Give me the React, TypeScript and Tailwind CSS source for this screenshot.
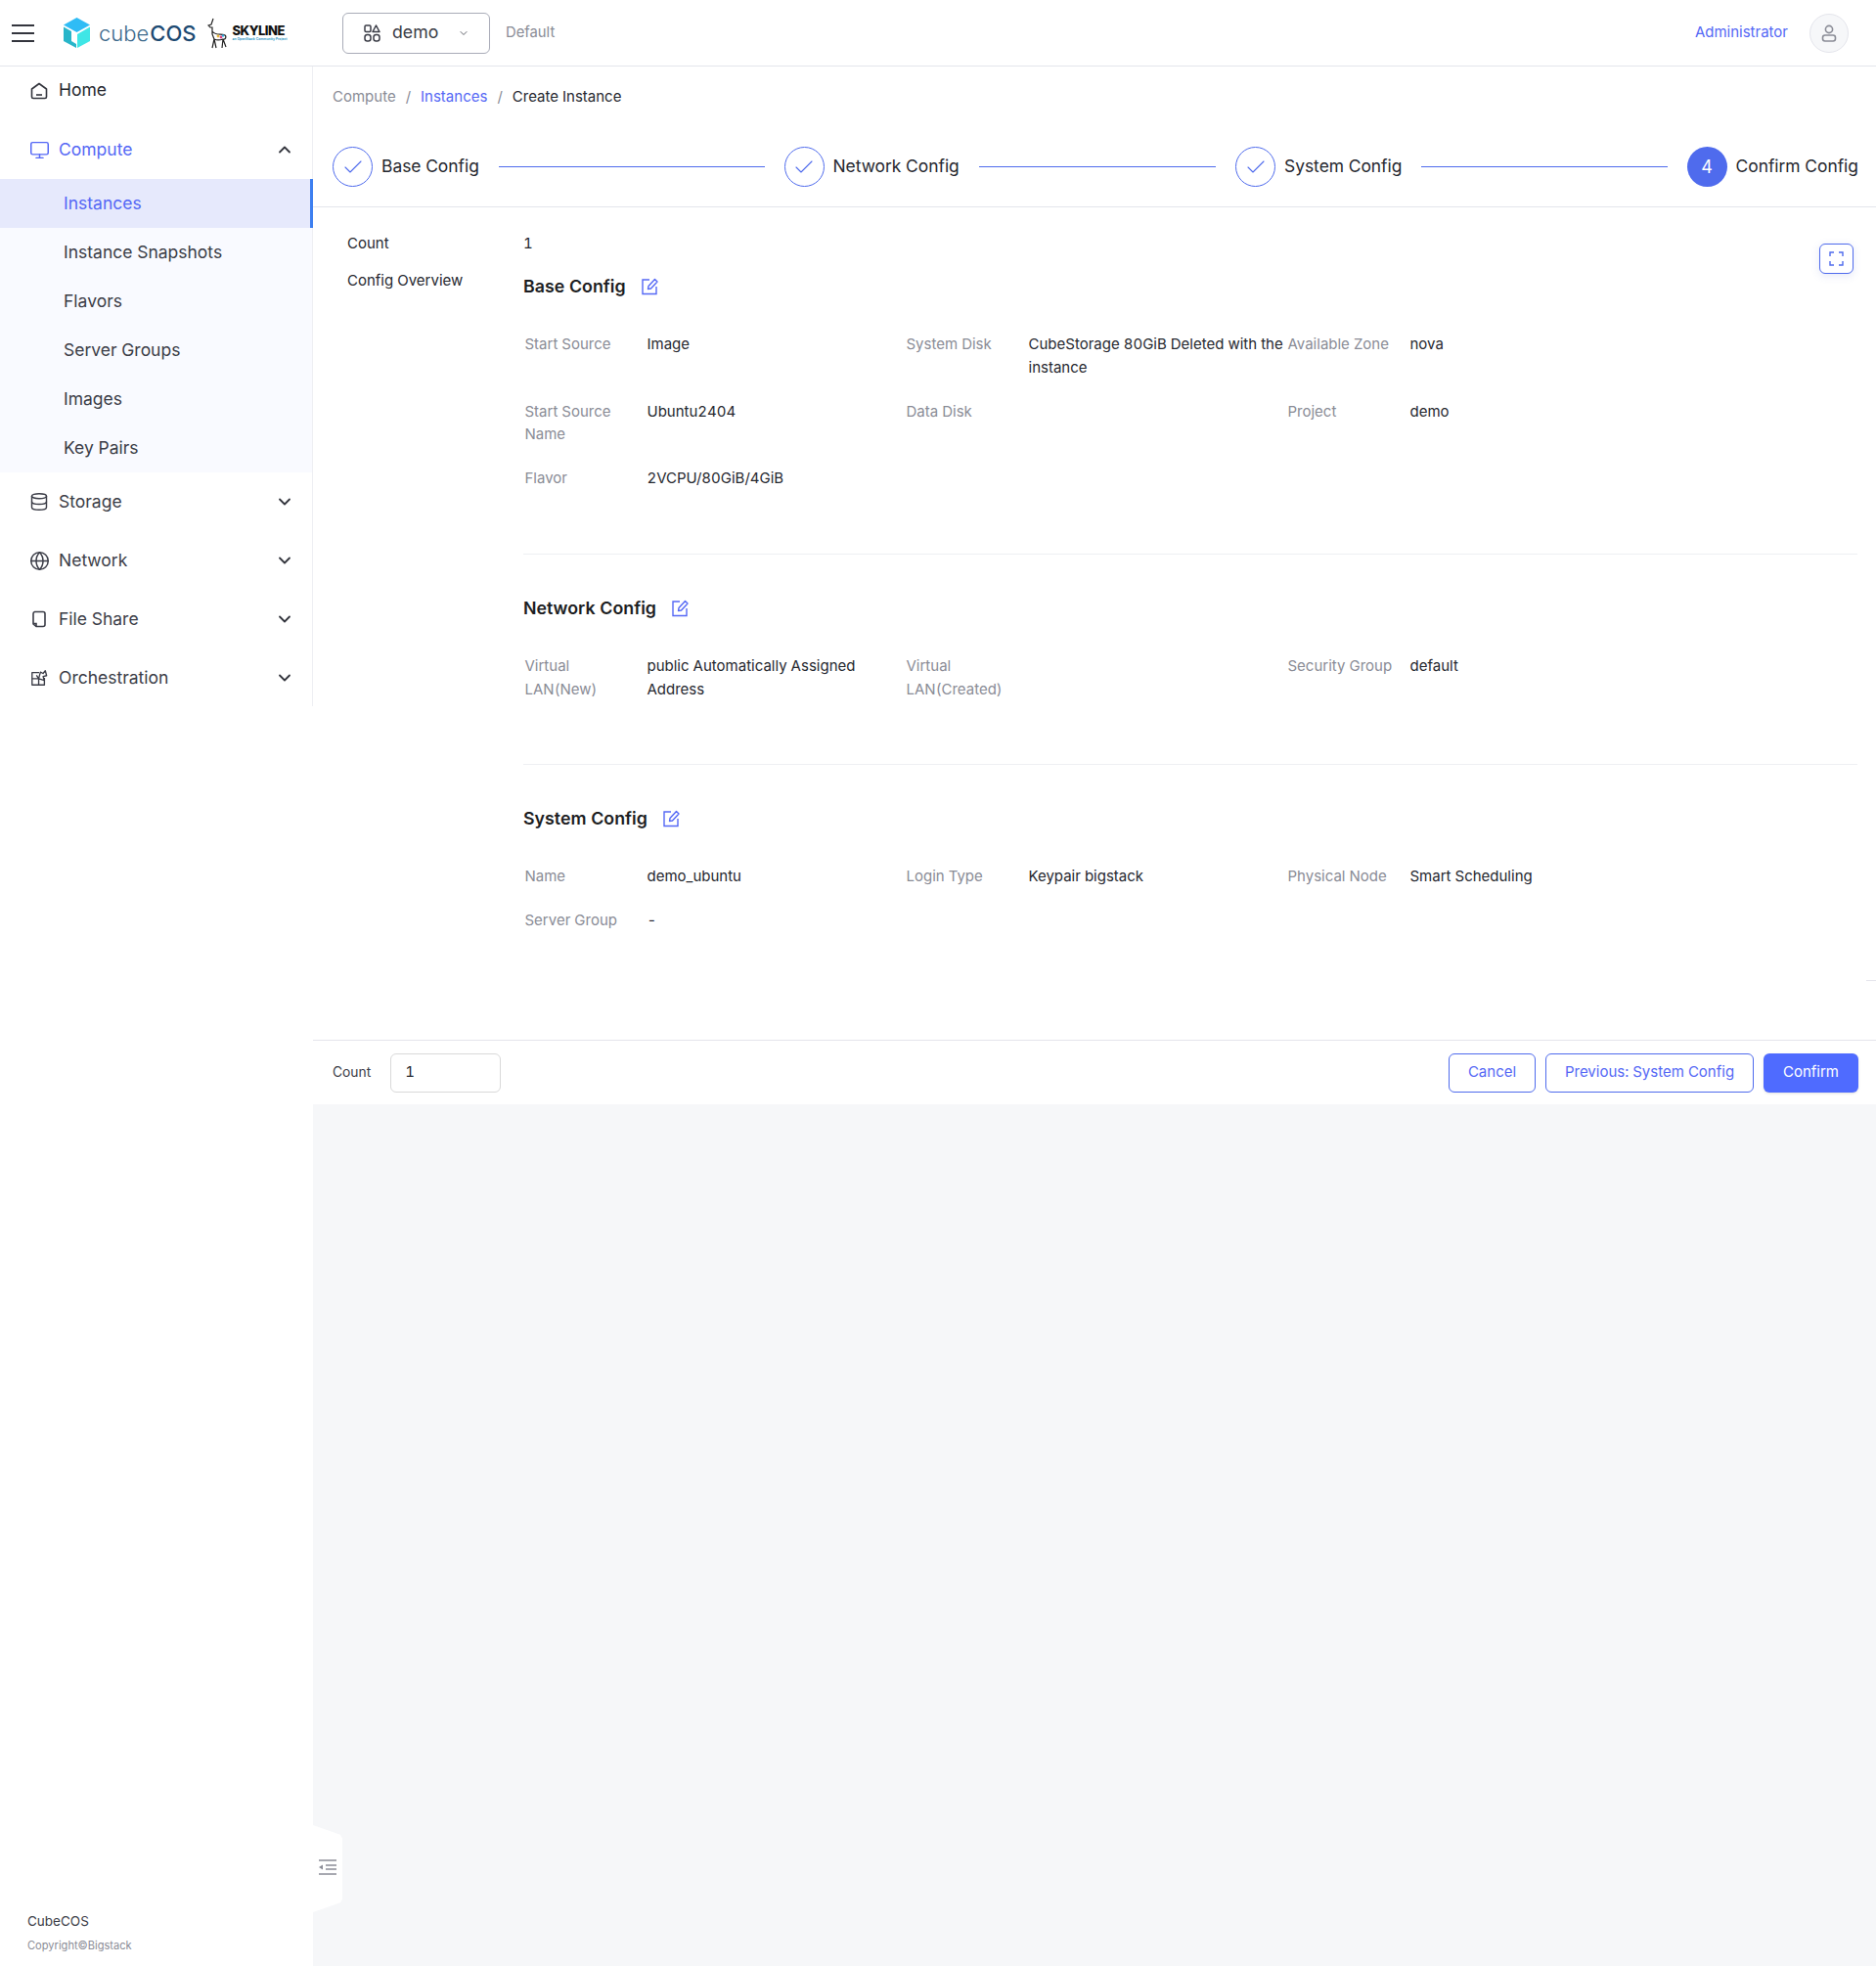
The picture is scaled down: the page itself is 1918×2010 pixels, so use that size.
import { Check, ChevronDown, ChevronUp, Database, Globe, Monitor } from "lucide-react"
import type { ReactNode } from "react"

const font = "font-['Inter','Noto_Sans',sans-serif]"

function Logo() {
  return (
    <div className="flex items-center">
      <svg width="29" height="33" viewBox="0 0 29 33">
        <path d="M14.5 1 L28 8.5 L14.5 16 L1 8.5 Z" fill="#2fbcf5" />
        <path d="M1 10.5 L9 15 V25 L14 28 V32 L1 25 Z" fill="#28b5c9" />
        <path d="M28 10.5 V25 L15 32 V18 Z" fill="#3fe6e6" />
      </svg>
      <span className="ml-[8px] text-[22px] leading-none text-[#3d6a8c] font-light">cube</span>
      <span className="ml-[1px] text-[22px] leading-none font-medium text-[#1d4a72]">COS</span>
      <svg className="ml-[12px]" width="24" height="32" viewBox="0 0 24 32" fill="none" stroke="#222" strokeWidth="1.2">
        <path d="M6 1 L4 7 L1 8 L3 10 L5 10 L5 17 L7 22 L5 31 M7 22 L9 31 M16 22 L15 31 M16 22 L19 30 M5 14 C9 19 14 16 18 18 C20 20 18 23 16 22 C13 23 9 23 7 22" />
        <circle cx="11" cy="19" r="1.4" fill="#e8b83a" stroke="none" />
        <circle cx="14" cy="20" r="1.4" fill="#d9417f" stroke="none" />
        <circle cx="16" cy="18.5" r="1.2" fill="#35a8e0" stroke="none" />
      </svg>
      <div className="ml-[1px] flex flex-col">
        <span className="text-[13px] leading-[13px] font-extrabold text-[#111] tracking-[-0.5px]">SKYLINE</span>
        <span className="text-[3.4px] leading-[5px] text-[#3a9ac9] font-bold whitespace-nowrap">an OpenStack Community Project</span>
      </div>
    </div>
  )
}

function Header() {
  return (
    <header className="h-[68px] shrink-0 bg-white border-b border-[#e4e5ec] flex items-center pl-[12px] pr-[28px]">
      <svg width="23" height="20" viewBox="0 0 23 20" stroke="#33353d" strokeWidth="2.2">
        <path d="M0 2 H23 M0 10 H23 M0 18 H23" />
      </svg>
      <div className="ml-[29px] w-[286px]">
        <Logo />
      </div>
      <div className="w-[151px] h-[42px] border border-[#a9acb8] rounded-[6px] flex items-center pl-[21px]">
        <svg width="17" height="18" viewBox="0 0 17 18" fill="none" stroke="#3b3d47" strokeWidth="1.5">
          <rect x="1" y="1" width="6" height="6.5" rx="1.2" />
          <path d="M12.5 1 L16 7.5 H9 Z" strokeLinejoin="round" />
          <rect x="1" y="10.5" width="6" height="6.5" rx="2.5" />
          <rect x="10" y="10.5" width="6" height="6.5" rx="2.5" />
        </svg>
        <span className="ml-[12px] text-[17.7px] text-[#3b3d47]">demo</span>
        <ChevronDown className="ml-[20px] text-[#3b3d47]" size={12} strokeWidth={1.6} />
      </div>
      <span className="ml-[16px] text-[14.8px] text-[#8a8c96]">Default</span>
      <span className="ml-auto text-[15px] text-[#5568f5]">Administrator</span>
      <div className="ml-[22px] w-[40px] h-[40px] rounded-full bg-[#f6f7f9] border border-[#e4e5ec] flex items-center justify-center">
        <svg width="16" height="18" viewBox="0 0 16 18" fill="none" stroke="#8a8c96" strokeWidth="1.6">
          <circle cx="8" cy="5" r="3.6" />
          <rect x="1.5" y="11" width="13" height="6" rx="2.4" />
        </svg>
      </div>
    </header>
  )
}

function HomeIcon() {
  return (
    <svg width="18" height="18" viewBox="0 0 18 18" fill="none" stroke="#33353d" strokeWidth="1.6">
      <path d="M1.5 7 L9 1.5 L16.5 7 V15 A1.5 1.5 0 0 1 15 16.5 H3 A1.5 1.5 0 0 1 1.5 15 Z" strokeLinejoin="round" />
      <path d="M6 13 H12" />
    </svg>
  )
}

function FileShareIcon() {
  return (
    <svg width="18" height="18" viewBox="0 0 18 18" fill="none" stroke="#3b3d47" strokeWidth="1.6">
      <path d="M4.5 1.5 H13 A2 2 0 0 1 15 3.5 V14.5 A2 2 0 0 1 13 16.5 H6 L3 14 V3.5 A2 2 0 0 1 4.5 1.5 Z" strokeLinejoin="round" />
      <path d="M3 13.5 H6 V16.5" />
    </svg>
  )
}

function OrchestrationIcon() {
  return (
    <svg width="20" height="20" viewBox="0 0 20 20" fill="none" stroke="#3b3d47" strokeWidth="1.5">
      <path d="M10 4 H2 V18 H16 V10" strokeLinejoin="round" />
      <path d="M2 11 H9.5 V18 M9.5 11 L7 7 M9.5 11 L11.5 3.5 L14.5 5 L17 2 L18.5 7.5 L14.5 8.5 L16 13 L9.5 11" strokeLinejoin="round" />
    </svg>
  )
}

function NavRow({ icon, label, active, open }: { icon: ReactNode; label: string; active?: boolean; open?: boolean }) {
  return (
    <div className="h-[60px] flex items-center pl-[31px] pr-[18px]">
      <div className="w-[18px] flex justify-center">{icon}</div>
      <span className={`ml-[11px] text-[17.5px] ${active ? "text-[#5568f5]" : "text-[#3b3d47]"}`}>{label}</span>
      {open ? (
        <ChevronUp className="ml-auto text-[#33353d]" size={20} strokeWidth={2.2} />
      ) : (
        <ChevronDown className="ml-auto text-[#33353d]" size={20} strokeWidth={2.2} />
      )}
    </div>
  )
}

const subItems = ["Instance Snapshots", "Flavors", "Server Groups", "Images", "Key Pairs"]

function Sidebar() {
  return (
    <aside className="relative w-[320px] shrink-0 bg-white flex flex-col justify-between">
      <div className="border-r border-[#eeeff3] h-[654px]">
        <div className="h-[49px] flex items-center pl-[31px]">
          <HomeIcon />
          <span className="ml-[11px] text-[17.5px] text-[#26282f]">Home</span>
        </div>
        <div className="pt-[6px]">
          <NavRow icon={<Monitor size={21} strokeWidth={1.7} className="shrink-0 text-[#5568f5]" />} label="Compute" active open />
        </div>
        <div className="bg-[#f9faff]">
          <div className="h-[50px] bg-[#e6e9fc] border-r-[3px] border-[#3d7ff0] -mr-[1px] flex items-center pl-[65px] text-[17.5px] text-[#5568f5]">
            Instances
          </div>
          {subItems.map((s) => (
            <div key={s} className="h-[50px] flex items-center pl-[65px] text-[17.5px] text-[#3b3d47]">
              {s}
            </div>
          ))}
        </div>
        <NavRow icon={<Database size={20} strokeWidth={1.7} className="shrink-0 text-[#3b3d47]" />} label="Storage" />
        <NavRow icon={<Globe size={21} strokeWidth={1.7} className="shrink-0 text-[#3b3d47]" />} label="Network" />
        <NavRow icon={<FileShareIcon />} label="File Share" />
        <NavRow icon={<OrchestrationIcon />} label="Orchestration" />
      </div>
      <div className="pl-[28px] pb-[13px]">
        <div className="text-[13.5px] leading-[20px] text-[#3b3d47]">CubeCOS</div>
        <div className="mt-[7px] text-[11.1px] leading-[16px] text-[#8a8c96]">Copyright©Bigstack</div>
      </div>
      <div className="absolute left-[320px] bottom-[55px] w-[30px] h-[89px] pb-[4px] bg-white [clip-path:polygon(0_0,93%_11%,100%_15%,100%_85%,93%_89%,0_100%)] flex items-center justify-center">
        <svg width="18" height="16" viewBox="0 0 18 16" stroke="#8a8c96" strokeWidth="1.4">
          <path d="M0 1 H18 M7 6 H18 M7 10 H18 M0 15 H18" />
          <path d="M0 8 L4 5.5 V10.5 Z" fill="#8a8c96" stroke="none" />
        </svg>
      </div>
    </aside>
  )
}

const steps = ["Base Config", "Network Config", "System Config"]

function Steps() {
  return (
    <div className="h-[81px] border-b border-[#e4e5ec] flex items-center pl-[20px] pr-[18px] pb-[1px]">
      {steps.map((s) => (
        <div key={s} className="flex flex-1 items-center">
          <div className="w-[41px] h-[41px] rounded-full border border-[#4f6bed] flex items-center justify-center">
            <Check size={24} strokeWidth={1.1} className="text-[#4f6bed]" />
          </div>
          <span className="ml-[9px] text-[17.4px] text-[#26282f] whitespace-nowrap">{s}</span>
          <div className="mx-[20px] flex-1 h-[1px] bg-[#4f6bed]" />
        </div>
      ))}
      <div className="w-[41px] h-[41px] rounded-full bg-[#4f6bed] flex items-center justify-center text-[18px] text-white">4</div>
      <span className="ml-[9px] text-[17.4px] text-[#26282f] whitespace-nowrap">Confirm Config</span>
    </div>
  )
}

function EditIcon() {
  return (
    <svg width="18" height="18" viewBox="0 0 18 18" fill="none" stroke="#5568f5" strokeWidth="1.4">
      <path d="M9 2 H2 V16.5 H16 V9" />
      <path d="M7.5 11.5 L8 8.5 L14.5 1.5 L17 4 L10.5 11 Z" strokeLinejoin="round" />
    </svg>
  )
}

function Field({ label, value }: { label: string; value?: string }) {
  return (
    <div className="flex mb-[21.5px] text-[15px] leading-[23.5px]">
      <div className="w-[125px] shrink-0 pr-[8px] text-[#8a8c96]">{label}</div>
      <div className="flex-1 text-[#26282f]">{value}</div>
    </div>
  )
}

function Section({
  title,
  fields,
  minH,
}: {
  title: string
  fields: { label: string; value?: string }[]
  minH: string
}) {
  return (
    <section className={minH}>
      <div className="flex items-center h-[24px]">
        <h3 className="text-[17.8px] font-semibold text-[#1c1d22]">{title}</h3>
        <span className="ml-[15px]">
          <EditIcon />
        </span>
      </div>
      <div className="mt-[35px] ml-[1.5px] grid grid-cols-[repeat(3,390px)]">
        {fields.map((f) => (
          <Field key={f.label} label={f.label} value={f.value} />
        ))}
      </div>
    </section>
  )
}

const baseFields = [
  { label: "Start Source", value: "Image" },
  { label: "System Disk", value: "CubeStorage 80GiB Deleted with the instance" },
  { label: "Available Zone", value: "nova" },
  { label: "Start Source Name", value: "Ubuntu2404" },
  { label: "Data Disk" },
  { label: "Project", value: "demo" },
  { label: "Flavor", value: "2VCPU/80GiB/4GiB" },
]

const networkFields = [
  { label: "Virtual LAN(New)", value: "public Automatically Assigned Address" },
  { label: "Virtual LAN(Created)" },
  { label: "Security Group", value: "default" },
]

const systemFields = [
  { label: "Name", value: "demo_ubuntu" },
  { label: "Login Type", value: "Keypair bigstack" },
  { label: "Physical Node", value: "Smart Scheduling" },
  { label: "Server Group", value: "-" },
]

function Overview() {
  return (
    <div className="relative h-[851px] pl-[35px] pr-[19px] pt-[26px]">
      <div className="flex text-[15px] leading-[22px] text-[#26282f]">
        <div className="w-[180px]">Count</div>
        <div>1</div>
      </div>
      <div className="flex mt-[16px]">
        <div className="w-[180px] text-[15px] leading-[22px] text-[#26282f]">Config Overview</div>
        <div className="flex-1 pt-[5px]">
          <Section title="Base Config" fields={baseFields} minH="h-[286px] border-b border-[#eeeff3]" />
          <Section title="Network Config" fields={networkFields} minH="h-[172px] mt-[43px] border-b border-[#eeeff3]" />
          <Section title="System Config" fields={systemFields} minH="mt-[43px]" />
        </div>
      </div>
      <button className="absolute right-[23px] top-[37px] w-[35px] h-[31px] rounded-[6px] border border-[#4f6bed] bg-white shadow-[0_2px_8px_rgba(80,100,200,0.15)] flex items-center justify-center">
        <svg width="15" height="15" viewBox="0 0 15 15" fill="none" stroke="#4f6bed" strokeWidth="1.4">
          <path d="M1 5 V1 H5 M10 1 H14 V5 M14 10 V14 H10 M5 14 H1 V10" />
        </svg>
      </button>
      <div className="absolute right-0 top-[790px] w-[10px] h-[1px] bg-[#e4e5ec]" />
    </div>
  )
}

function Footer() {
  return (
    <div className="h-[66px] border-t border-[#e4e5ec] flex items-center pl-[20px] pr-[18px] bg-white">
      <span className="text-[13.8px] text-[#3b3d47]">Count</span>
      <div className="ml-[20px] w-[113px] h-[40px] rounded-[6px] border border-[#d9d9d9] flex items-center pl-[14px] text-[15px] text-[#26282f]">
        1
      </div>
      <button className="ml-auto h-[40px] w-[89px] rounded-[6px] border border-[#4f6bed] text-[15px] text-[#5568f5]">Cancel</button>
      <button className="ml-[10px] h-[40px] w-[213px] rounded-[6px] border border-[#4f6bed] text-[15px] text-[#5568f5]">
        Previous: System Config
      </button>
      <button className="ml-[10px] h-[40px] w-[97px] rounded-[6px] bg-[#4f6bff] text-[15px] text-white shadow-sm">Confirm</button>
    </div>
  )
}

export default function App() {
  return (
    <div className={`w-[1918px] h-[2010px] flex flex-col bg-white tabular-nums ${font}`}>
      <Header />
      <div className="flex flex-1 min-h-0">
        <Sidebar />
        <main className="flex-1 bg-[#f6f7f9]">
          <div className="bg-white">
            <div className="h-[63px] flex items-center pl-[20px] text-[15px]">
              <span className="text-[#8a8c96]">Compute</span>
              <span className="mx-[10px] text-[#8a8c96]">/</span>
              <span className="text-[#5568f5]">Instances</span>
              <span className="mx-[10px] text-[#8a8c96]">/</span>
              <span className="text-[#26282f]">Create Instance</span>
            </div>
            <Steps />
            <Overview />
            <Footer />
          </div>
        </main>
      </div>
    </div>
  )
}
